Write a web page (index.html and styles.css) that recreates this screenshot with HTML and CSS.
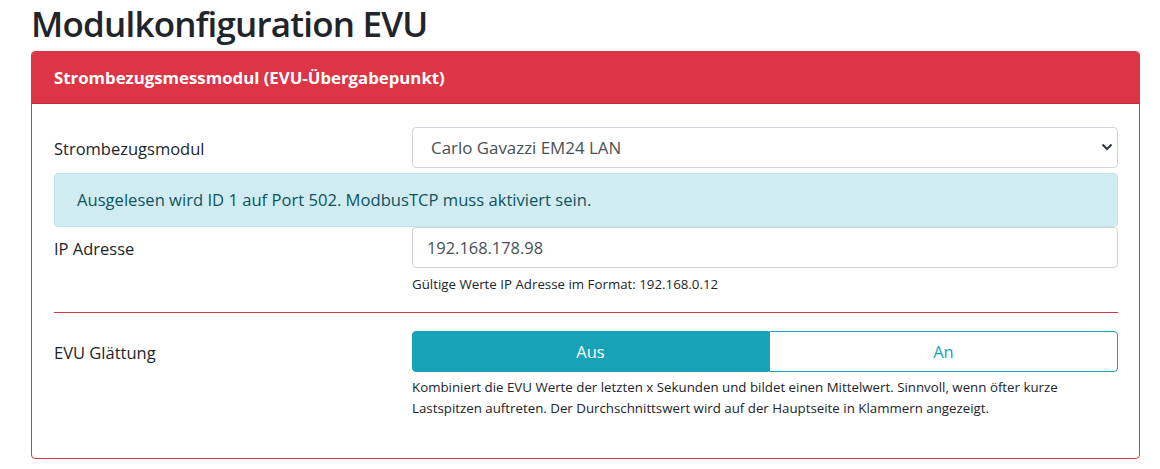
FILE: index.html
```html
<!DOCTYPE html>
<html lang="de">
<head>
    <meta charset="UTF-8">
    <meta name="viewport" content="width=device-width, initial-scale=1.0">
    <title>Modulkonfiguration EVU</title>
    <link rel="stylesheet" href="styles.css">
</head>
<body>
    <div class="page">
        <h1 class="title">Modulkonfiguration EVU</h1>
        <div class="card">
            <div class="card-header">Strombezugsmessmodul (EVU-Übergabepunkt)</div>
            <div class="card-body">
                <div class="form-row">
                    <label class="col-label" for="modul">Strombezugsmodul</label>
                    <div class="select-wrap">
                        <select id="modul" class="form-control form-select">
                            <option>Carlo Gavazzi EM24 LAN</option>
                        </select>
                        <svg class="select-arrow" width="12" height="8" viewBox="0 0 12 8">
                            <path d="M1.5 1.5 L6 6 L10.5 1.5" fill="none" stroke="#343a40" stroke-width="2.2"/>
                        </svg>
                    </div>
                </div>
                <div class="alert">Ausgelesen wird ID 1 auf Port 502. ModbusTCP muss aktiviert sein.</div>
                <div class="form-row">
                    <label class="col-label" for="ip">IP Adresse</label>
                    <div>
                        <input type="text" id="ip" class="form-control form-input" value="192.168.178.98">
                        <small class="help">Gültige Werte IP Adresse im Format: 192.168.0.12</small>
                    </div>
                </div>
                <hr class="divider">
                <div class="form-row">
                    <label class="col-label">EVU Glättung</label>
                    <div>
                        <div class="btn-group">
                            <button class="btn active">Aus</button>
                            <button class="btn">An</button>
                        </div>
                        <small class="help help-wide">Kombiniert die EVU Werte der letzten x Sekunden und bildet einen Mittelwert. Sinnvoll, wenn öfter kurze Lastspitzen auftreten. Der Durchschnittswert wird auf der Hauptseite in Klammern angezeigt.</small>
                    </div>
                </div>
            </div>
        </div>
    </div>
</body>
</html>
```

FILE: styles.css
```css
body {
    font-family: "Open Sans", "Noto Sans", sans-serif;
    margin: 0;
    padding: 0;
    background-color: #fff;
    color: #212529;
}
.page {
    width: 1109px;
    margin-left: 31px;
}
.title {
    font-size: 35px;
    font-weight: 600;
    letter-spacing: -0.8px;
    line-height: 48px;
    margin: 0 0 3px 0;
    color: #212529;
}
.card {
    border: 1px solid #dc3545;
    border-radius: 4px;
}
.card-header {
    background-color: #dc3545;
    color: #fff;
    font-weight: 700;
    font-size: 16.8px;
    line-height: 27px;
    padding: 12px 22px;
    border-bottom: 1px solid rgba(0, 0, 0, 0.125);
    border-radius: 3px 3px 0 0;
}
.card-body {
    padding: 23px 21px 39px 22px;
}
.form-row {
    display: grid;
    grid-template-columns: 358px 1fr;
}
.col-label {
    font-size: 16.5px;
    line-height: 27px;
    padding-top: 8px;
}
.form-control {
    display: block;
    width: 100%;
    box-sizing: border-box;
    height: 41px;
    border: 1px solid #ced4da;
    border-radius: 4px;
    background-color: #fff;
    color: #495057;
    font-family: inherit;
}
.select-wrap {
    position: relative;
}
.form-select {
    appearance: none;
    font-size: 16.9px;
    padding: 0 30px 0 18px;
}
.select-arrow {
    position: absolute;
    right: 5px;
    top: 16px;
}
.form-input {
    font-size: 16.4px;
    padding: 0 14px;
}
.alert {
    margin-top: 5px;
    padding: 12px 22px;
    line-height: 28px;
    font-size: 16.6px;
    background-color: #d1ecf1;
    border: 1px solid #bee5eb;
    border-radius: 4px;
    color: #0c5460;
}
.help {
    display: block;
    font-size: 13.3px;
    line-height: 21px;
    margin-top: 6px;
    color: #212529;
}
.help-wide {
    margin-top: 5px;
    max-width: 670px;
}
.divider {
    border: 0;
    border-top: 1px solid #dc3545;
    margin: 17px 0 18px 0;
}
.btn-group {
    display: flex;
    height: 41px;
}
.btn {
    flex: 1 1 auto;
    font-family: inherit;
    font-size: 16.5px;
    border: 1px solid #17a2b8;
    background-color: #fff;
    color: #17a2b8;
    cursor: pointer;
    border-radius: 0 4px 4px 0;
}
.btn.active {
    background-color: #17a2b8;
    color: #fff;
    border-radius: 4px 0 0 4px;
}
```
